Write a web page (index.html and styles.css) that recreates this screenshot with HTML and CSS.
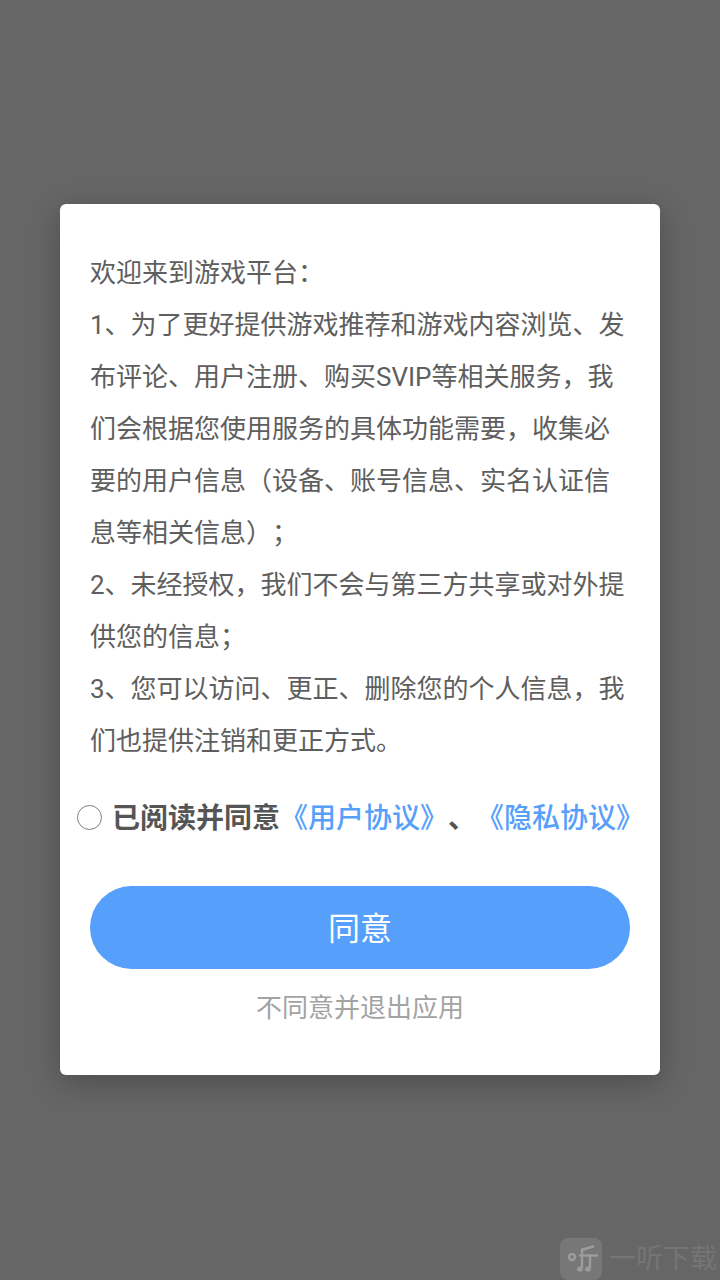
FILE: index.html
```html
<!DOCTYPE html>
<html lang="zh-CN">
<head>
<meta charset="UTF-8" />
<meta name="viewport" content="width=device-width, initial-scale=1" />
<title>欢迎来到游戏平台</title>
<link rel="stylesheet" href="styles.css">
</head>
<body>
  <section class="popup" role="dialog">
    <div class="terms">
      <p>欢迎来到游戏平台：</p>
      <p>1、为了更好提供游戏推荐和游戏内容浏览、发布评论、用户注册、购买SVIP等相关服务，我们会根据您使用服务的具体功能需要，收集必要的用户信息（设备、账号信息、实名认证信息等相关信息）；</p>
      <p>2、未经授权，我们不会与第三方共享或对外提供您的信息；</p>
      <p>3、您可以访问、更正、删除您的个人信息，我们也提供注销和更正方式。</p>
    </div>

    <div class="agree-row">
      <span class="radio"></span>
      <span class="agree-text">已阅读并同意<a href="#">《用户协议》</a>、<a href="#">《隐私协议》</a></span>
    </div>

    <button class="agree-btn" type="button">同意</button>
    <button class="exit-btn" type="button">不同意并退出应用</button>
  </section>

  <div class="watermark">
    <svg class="watermark-icon" width="42" height="42" viewBox="0 0 42 42">
      <rect width="42" height="42" rx="8" fill="#777" />
      <g fill="none" stroke="#9c9c9c" stroke-width="2.5" stroke-linecap="round">
        <circle cx="12" cy="19" r="3" />
        <path d="M23 11.5 L33 8.5" />
        <path d="M20 17.5 H37" />
        <path d="M22 11.5 V29" />
        <path d="M30 17.5 V29" />
      </g>
      <ellipse cx="20" cy="31" rx="3" ry="2.5" fill="#9c9c9c" />
      <ellipse cx="28" cy="31" rx="3" ry="2.5" fill="#9c9c9c" />
    </svg>
    <span class="watermark-name">一听下载</span>
  </div>
</body>
</html>
```

FILE: styles.css
```css
* {
  box-sizing: border-box;
}
html, body {
  margin: 0;
  padding: 0;
  height: 100%;
}

body {
  position: relative;
  height: 1280px;
  overflow: hidden;
  padding-top: 204px;
  background: #666;
  font-family: Roboto, "Noto Sans CJK SC", sans-serif;
  text-spacing-trim: space-all;
}

/* Dialog */
.popup {
  width: 600px;
  height: 871px;
  margin: 0 auto;
  padding-top: 43px;
  background: #fff;
  border-radius: 6px;
  box-shadow: 0 8px 30px rgba(0, 0, 0, 0.25);
  display: flex;
  flex-direction: column;
  align-items: center;
}

.terms {
  width: 540px;
  color: #5e5e5e;
  font-size: 26px;
  line-height: 52px;
}
.terms p {
  margin: 0;
}

/* Agreement row */
.agree-row {
  align-self: flex-start;
  display: flex;
  align-items: center;
  gap: 10px;
  margin: 24px 0 0 17px;
  height: 52px;
  white-space: nowrap;
}
.radio {
  width: 25px;
  height: 25px;
  flex: none;
  border: 1.5px solid #808080;
  border-radius: 50%;
}
.agree-text {
  position: relative;
  top: -1px;
  color: #555;
  font-size: 28px;
  font-weight: 700;
}
.agree-text a {
  color: #56a0fb;
  font-weight: 500;
  text-decoration: none;
}

/* Buttons */
.agree-btn {
  width: 540px;
  height: 83px;
  margin-top: 43px;
  padding: 0 0 3px;
  border: none;
  border-radius: 42px;
  background: #56a0fb;
  color: #fff;
  font-family: inherit;
  font-size: 32px;
}
.exit-btn {
  margin-top: 17px;
  padding: 0;
  border: none;
  background: none;
  color: #a3a3a3;
  font-family: inherit;
  font-size: 26px;
  line-height: 44px;
}

/* Watermark, bottom right corner */
.watermark {
  position: absolute;
  left: 560px;
  top: 1238px;
  display: flex;
  align-items: center;
  gap: 7px;
  white-space: nowrap;
}
.watermark-icon {
  flex: none;
}
.watermark-name {
  color: #757575;
  font-size: 27px;
  line-height: 42px;
}
```
